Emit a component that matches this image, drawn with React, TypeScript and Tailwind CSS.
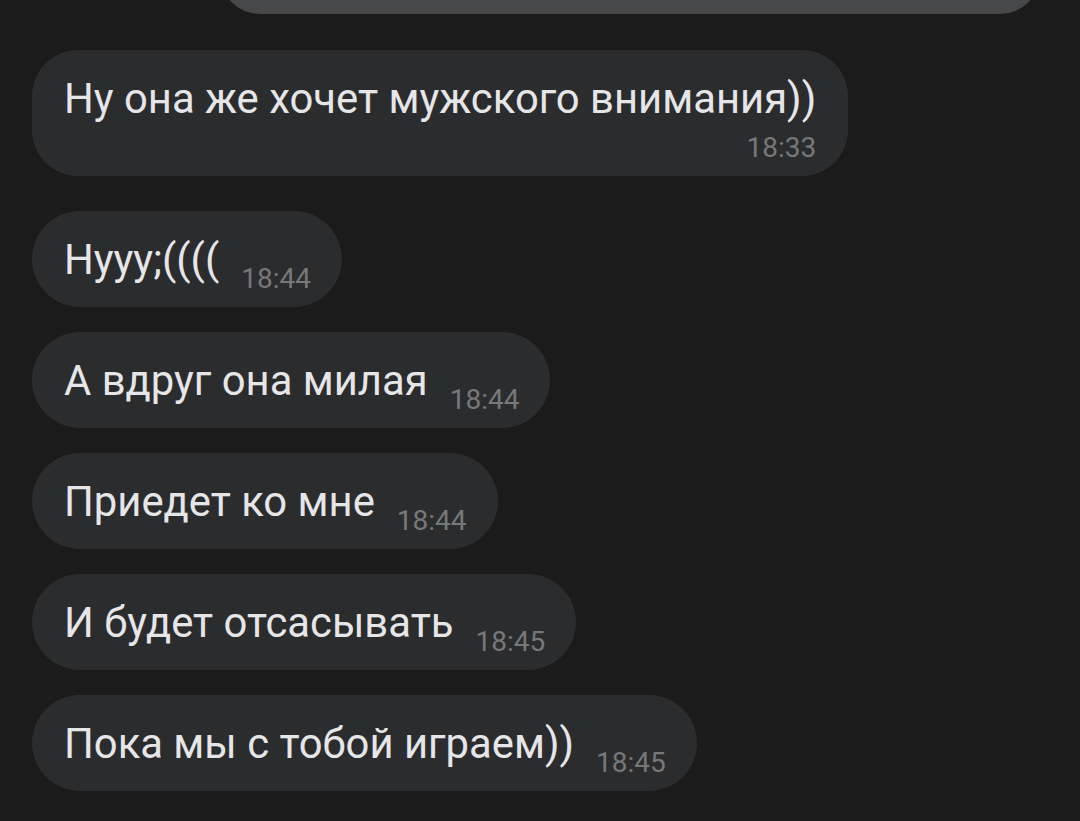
const messages = [
  { text: "Нууу;((((", time: "18:44" },
  { text: "А вдруг она милая", time: "18:44" },
  { text: "Приедет ко мне", time: "18:44" },
  { text: "И будет отсасывать", time: "18:45" },
  { text: "Пока мы с тобой играем))", time: "18:45" },
];

const Bubble = ({ text, time }: { text: string; time: string }) => {
  return (
    <div className="flex items-end h-[96px] rounded-full bg-[#2b2c2e] pl-8 pr-[31px] pt-[25px] pb-[23px]">
      <span className="text-[41.8px] leading-[48px] text-[#e6e6e8] whitespace-nowrap">{text}</span>
      <span className="ml-[22px] mb-[-9px] text-[28px] leading-[28px] text-[#77787a]">{time}</span>
    </div>
  );
};

export default function App() {
  return (
    <div
      className="min-h-[821px] w-full overflow-hidden bg-[#1b1b1b] flex flex-col items-start px-8 pb-[30px]"
      style={{ fontFamily: "Roboto, 'Noto Sans', sans-serif" }}
    >
      <div className="ml-[188px] mt-[-66px] h-[80px] w-[820px] rounded-[40px] bg-[#47484a]" />

      <div className="mt-[36px] flex flex-col rounded-[46px] bg-[#2b2c2e] pl-8 pr-8 pt-[25px] pb-[14px]">
        <span className="text-[41.8px] leading-[48px] text-[#e6e6e8] whitespace-nowrap">
          Ну она же хочет мужского внимания))
        </span>
        <span className="self-end mt-[11px] text-[28px] leading-[28px] text-[#77787a]">18:33</span>
      </div>

      <div className="mt-[35px] flex flex-col items-start gap-[25px]">
        {messages.map((m, i) => (
          <Bubble key={i} text={m.text} time={m.time} />
        ))}
      </div>
    </div>
  );
}
